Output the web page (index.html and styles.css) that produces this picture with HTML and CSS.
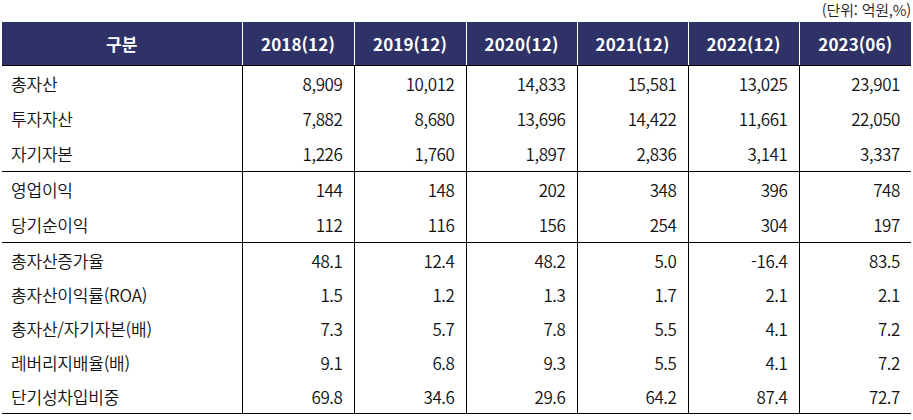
FILE: index.html
```html
<!DOCTYPE html>
<html lang="ko">
<head>
<meta charset="utf-8">
<link rel="stylesheet" href="styles.css">
</head>
<body>
<div class="wrap">
  <div class="unit">(단위: 억원,%)</div>
  <table class="fin">
    <colgroup>
      <col class="c-label"><col class="c-num"><col class="c-num"><col class="c-num2"><col class="c-num2"><col class="c-num2"><col class="c-num">
    </colgroup>
    <thead>
      <tr>
        <th>구분</th><th>2018(12)</th><th>2019(12)</th><th>2020(12)</th><th>2021(12)</th><th>2022(12)</th><th>2023(06)</th>
      </tr>
    </thead>
    <tbody class="g1">
      <tr><td>총자산</td><td>8,909</td><td>10,012</td><td>14,833</td><td>15,581</td><td>13,025</td><td>23,901</td></tr>
      <tr><td>투자자산</td><td>7,882</td><td>8,680</td><td>13,696</td><td>14,422</td><td>11,661</td><td>22,050</td></tr>
      <tr><td>자기자본</td><td>1,226</td><td>1,760</td><td>1,897</td><td>2,836</td><td>3,141</td><td>3,337</td></tr>
    </tbody>
    <tbody class="g2">
      <tr><td>영업이익</td><td>144</td><td>148</td><td>202</td><td>348</td><td>396</td><td>748</td></tr>
      <tr><td>당기순이익</td><td>112</td><td>116</td><td>156</td><td>254</td><td>304</td><td>197</td></tr>
    </tbody>
    <tbody class="g3">
      <tr><td>총자산증가율</td><td>48.1</td><td>12.4</td><td>48.2</td><td>5.0</td><td>-16.4</td><td>83.5</td></tr>
      <tr><td>총자산이익률(ROA)</td><td>1.5</td><td>1.2</td><td>1.3</td><td>1.7</td><td>2.1</td><td>2.1</td></tr>
      <tr><td>총자산/자기자본(배)</td><td>7.3</td><td>5.7</td><td>7.8</td><td>5.5</td><td>4.1</td><td>7.2</td></tr>
      <tr><td>레버리지배율(배)</td><td>9.1</td><td>6.8</td><td>9.3</td><td>5.5</td><td>4.1</td><td>7.2</td></tr>
      <tr><td>단기성차입비중</td><td>69.8</td><td>34.6</td><td>29.6</td><td>64.2</td><td>87.4</td><td>72.7</td></tr>
    </tbody>
  </table>
</div>
</body>
</html>
```
FILE: styles.css
```css
html, body {
  margin: 0;
  padding: 0;
  background: #ffffff;
}
body {
  font-family: "Noto Sans CJK KR", "Noto Sans", sans-serif;
  color: #111;
}
.wrap {
  padding: 0 2px;
  width: 909px;
}
.unit {
  height: 22px;
  line-height: 19px;
  font-size: 15px;
  font-weight: 350;
  text-align: right;
  color: #222;
  letter-spacing: -0.2px;
}
.fin {
  width: 909px;
  border-collapse: collapse;
  table-layout: fixed;
  font-size: 17px;
}
.c-label { width: 240px; }
.c-num { width: 112px; }
.c-num2 { width: 111px; }
.fin th {
  background: #2e3266;
  color: #fff;
  font-weight: bold;
  font-size: 17px;
  height: 43px;
  padding: 0;
  text-align: center;
  border-left: 1px solid #ffffff;
  border-bottom: 1px solid #000;
  letter-spacing: 0.1px;
}
.fin th:first-child { border-left: none; }
.fin td {
  padding: 0 11px 0 0;
  text-align: right;
  border-left: 1px solid #000;
  height: 35px;
  font-weight: 350;
  letter-spacing: -0.4px;
  vertical-align: middle;
}
.fin td:first-child {
  border-left: none;
  text-align: left;
  padding: 0 0 0 9px;
  letter-spacing: -0.2px;
}
.fin tbody { border-bottom: 1px solid #000; }
.g3 td { height: 34px; }
```
